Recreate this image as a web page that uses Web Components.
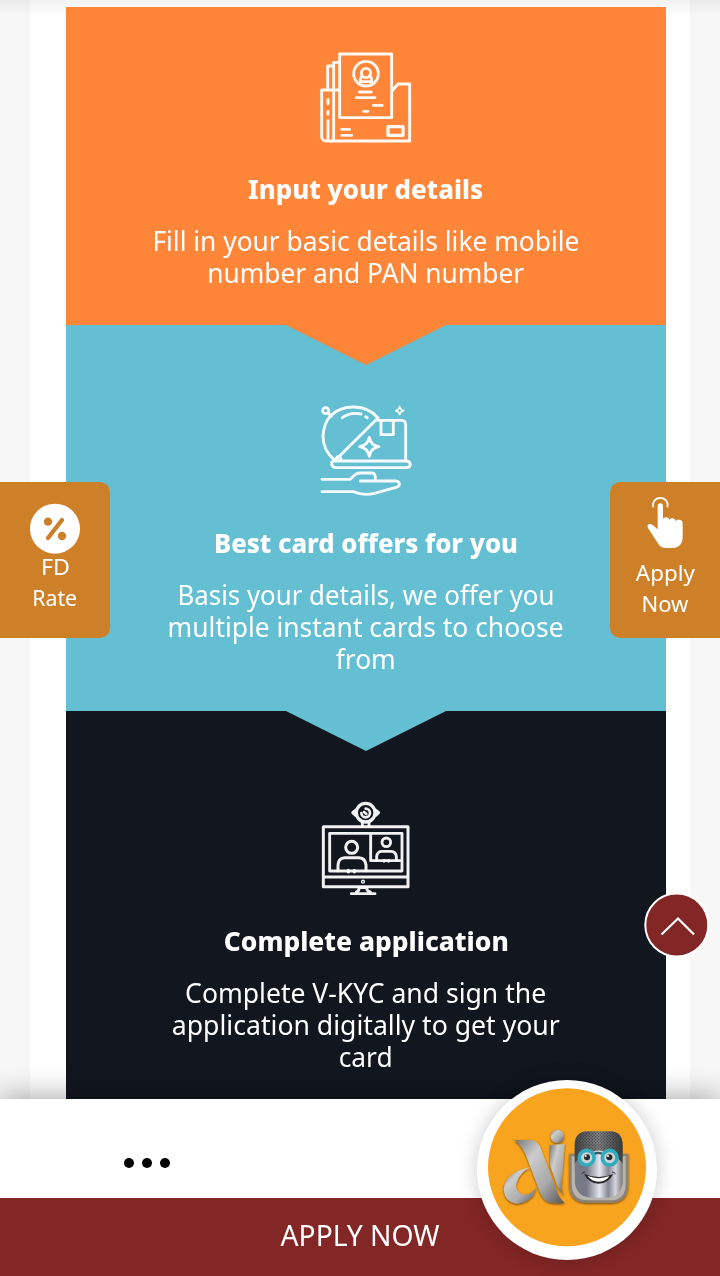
<!DOCTYPE html>
<html lang="en">
<head>
<meta charset="utf-8">
<title>Apply Now</title>
<style>
html,body{margin:0;height:100%;overflow:hidden}
body{font-family:"Noto Sans","Open Sans",sans-serif;background:#f7f7f7}
</style>
</head>
<body>
<card-page>
  <step-card style="--bg:#ff8639;--h:318px;--pt:33px;--gap:13px;--z:3">
    <step-icon slot="icon" name="folder"></step-icon>
    <fit-line slot="title" w="235">Input your details</fit-line>
    <fit-line w="427">Fill in your basic details like mobile</fit-line>
    <fit-line w="317">number and PAN number</fit-line>
  </step-card>
  <step-card style="--bg:#64bfd3;--h:386px;--pt:65px;--gap:17px;--z:2">
    <step-icon slot="icon" name="offer"></step-icon>
    <fit-line slot="title" w="304">Best card offers for you</fit-line>
    <fit-line w="377">Basis your details, we offer you</fit-line>
    <fit-line w="396">multiple instant cards to choose</fit-line>
    <fit-line w="60">from</fit-line>
  </step-card>
  <step-card last style="--bg:#12161f;--h:388px;--pt:79px;--gap:15px;--z:1">
    <step-icon slot="icon" name="video"></step-icon>
    <fit-line slot="title" w="285">Complete application</fit-line>
    <fit-line w="361">Complete V-KYC and sign the</fit-line>
    <fit-line w="388">application digitally to get your</fit-line>
    <fit-line w="54">card</fit-line>
  </step-card>
  <side-tab slot="over" side="left">
    <svg slot="icon" width="130" height="87" viewBox="0 0 390 261"><circle cx="165" cy="176" r="75" fill="#fff"/><g fill="#cd8028"><circle cx="144" cy="155" r="12.5"/><circle cx="186" cy="198" r="12.5"/></g><path d="M186 150L144 204" stroke="#cd8028" stroke-width="13" stroke-linecap="round"/></svg>
    <fit-line w="29">FD</fit-line><fit-line w="45">Rate</fit-line>
  </side-tab>
  <side-tab slot="over" side="right">
    <svg slot="icon" width="120" height="93" viewBox="0 0 360 279"><path d="M160 112a22 22 0 1 1 42 0" fill="none" stroke="#fff" stroke-width="5"/><path d="M173 108a8 8 0 0 1 16 0V147q2-5 9-5 9 0 10 8 2-6 9-5 9 0 10 9 3-6 10-5 11 1 11 11V199q0 34-30 35H197q-14 0-22-12L144 174c-5-11 4-16 14-9l15 13Z" fill="#fff"/></svg>
    <fit-line w="59">Apply</fit-line><fit-line w="47">Now</fit-line>
  </side-tab>
  <scroll-top slot="over"></scroll-top>
  <bottom-bar slot="over"><fit-line w="159">APPLY NOW</fit-line></bottom-bar>
  <chat-bot slot="over"></chat-bot>
</card-page>
<script>
const define=(name,html,init)=>customElements.define(name,class extends HTMLElement{
  connectedCallback(){
    if(this.shadowRoot)return;
    this.attachShadow({mode:'open'}).innerHTML=html;
    if(init)init(this,this.shadowRoot);
  }
});

define('card-page',`<style>
:host{display:block;position:relative;width:720px;height:1276px;overflow:hidden;background:#f7f7f7}
main{box-sizing:border-box;width:660px;height:1099px;margin:0 auto;padding:7px 24px 0 36px;background:#fff}
.top{position:absolute;inset:0 0 auto;height:16px;background:linear-gradient(#0000000d,#0000)}
</style><div class="top"></div><main><slot></slot></main><slot name="over"></slot>`);

define('step-card',`<style>
:host{display:flex;flex-direction:column;align-items:center;box-sizing:border-box;position:relative;z-index:var(--z);height:var(--h);padding-top:var(--pt);background:var(--bg);color:#fff;font-size:27px;line-height:32px}
:host(:not([last]))::after{content:"";position:absolute;top:calc(100% - 1px);left:220px;width:160px;height:41px;background:var(--bg);clip-path:polygon(0 0,100% 0,100% 1px,50% 100%,0 1px)}
h3{margin:var(--gap) 0 20px;font-size:26.5px;line-height:32px;font-weight:800}
p{margin:0;display:flex;flex-direction:column;align-items:center}
</style><slot name="icon"></slot><h3><slot name="title"></slot></h3><p><slot></slot></p>`);

const icons={
folder:`<path d="M119 42H275V233H119ZM119 67H101V150M101 78H83V150M119 150H65V291Q66 303 80 303H329V132H294L276 153M101 152V300"/><circle cx="198" cy="101" r="37"/><circle cx="198" cy="99" r="14"/><path d="M181 127V118Q182 111 188 108M215 127V118Q214 111 208 108M187 125H209M178 156H214M169 173H225M220 196H247M191 214H204M125 268H149M125 286H155M84 178V191M84 214V223M84 242V296"/><path d="M264 260H309V286H264Z" stroke-width="10"/>`,
offer:`<path d="M104 211Q69 181 69 138Q71 101 90 79C126 42 198 40 234 84M234 84L106 211M104 211L112 201Q121 194 124 212M232 91H306Q317 92 317 104V211M103 213H320Q330 214 331 224Q330 233 320 233H107Q94 232 95 216Z"/><path d="M127 83Q151 65 183 72M197 80L202 83"/><circle cx="77" cy="62" r="9"/><path d="M84 69L94 79M243 94V134H280V94"/><path d="M208 142Q212 167 237 170Q212 174 208 199Q203 174 179 170Q203 167 208 142Z"/><path stroke-width="5" d="M299 50Q301 60 311 62Q301 64 299 74Q297 64 287 62Q297 60 299 50Z"/><path d="M66 268H151L164 255Q171 249 181 249H217Q228 250 226 271M181 273H287Q302 275 297 287Q292 292 277 295L223 310Q190 318 160 305H66"/>`,
video:`<path d="M70 110H324V290H70ZM72 261H322" stroke-width="9"/><path d="M89 130H306V243H89ZM212 130V212H305"/><circle cx="197" cy="68" r="28" stroke-width="10"/><path d="M166 61L158 68L166 76M228 61L236 68L228 76M187 97V109M207 97V109"/><path d="M197 56A13 13 0 1 1 184 69" stroke-width="8"/><path d="M192 66L199 72" stroke-width="8"/><circle cx="155" cy="172" r="18" stroke-width="9"/><path d="M114 242V225Q115 204 134 203H177Q196 204 198 225V242M145 241V246M163 241V246" stroke-width="9"/><circle cx="259" cy="157" r="13"/><path d="M230 211V200Q231 185 245 184H273Q288 185 289 200V211M252 211V214M266 211V214"/><circle cx="189" cy="275" r="2"/><path d="M169 306Q178 304 177 293H200Q200 304 211 306M154 311H225"/>`};
define('step-icon',`<style>:host{display:block;width:130px;height:120px}svg{display:block}</style><svg width="130" height="120" viewBox="3 0 390 360" fill="none" stroke="#fff" stroke-opacity=".94" stroke-width="8.6" stroke-linecap="round" stroke-linejoin="round"></svg>`,
 (el,root)=>{root.querySelector('svg').innerHTML=icons[el.getAttribute('name')]});

define('side-tab',`<style>
:host{position:absolute;z-index:5;top:482px;width:110px;height:156px;box-sizing:border-box;background:#cd8028;color:#fff;display:flex;flex-direction:column;align-items:center;font-size:21.5px;line-height:31px}
:host([side=left]){left:0;border-radius:0 10px 10px 0}
:host([side=right]){right:0;border-radius:10px 0 0 10px}
.icon{height:69px;width:110px}
:host([side=right]) .icon{height:75px}
::slotted(svg){display:block;margin-top:-12px}
:host([side=right]) ::slotted(svg){margin-left:-10px}
</style><div class="icon"><slot name="icon"></slot></div><slot></slot>`);

define('scroll-top',`<style>
:host{position:absolute;z-index:5;left:644px;top:893px;width:65px;height:65px}
svg{display:block}
</style><svg width="65" height="65"><circle cx="32.8" cy="32" r="31.5" fill="#832626" stroke="#fff" stroke-width="2"/><path d="M17.5 41.5L34 25.5L50 41.5" fill="none" stroke="#fff" stroke-width="2.2"/></svg>`);

define('bottom-bar',`<style>
:host{position:absolute;z-index:6;inset:1099px 0 0;display:flex;flex-direction:column;background:#fff;box-shadow:0 0 30px #0006}
.menu{height:99px;display:flex;gap:8px;box-sizing:border-box;padding:59px 0 0 124px}
i{width:10px;height:10px;border-radius:50%;background:#000}
.apply{height:78px;display:flex;justify-content:center;background:#832626;color:#fff;font-size:29.5px;line-height:74px}
</style><div class="menu"><i></i><i></i><i></i></div><div class="apply"><slot></slot></div>`);

define('chat-bot',`<style>
:host{position:absolute;z-index:7;left:477px;top:1080px;width:180px;height:180px;border-radius:50%;background:#fff;box-shadow:0 0 20px #0003}
svg{display:block;margin:-10px 0 0 -17px}
</style><svg width="210" height="206" viewBox="0 0 630 618">
<defs>
<linearGradient id="m" x2="1" y2="1"><stop stop-color="#777"/><stop offset=".3" stop-color="#ccc"/><stop offset=".65" stop-color="#aaa"/><stop offset="1" stop-color="#555"/></linearGradient>
<linearGradient id="f"><stop stop-color="#777b86"/><stop offset=".25" stop-color="#777985"/><stop offset=".52" stop-color="#e4e7ef"/><stop offset=".7" stop-color="#858895"/><stop offset=".85" stop-color="#d4d5dc"/><stop offset="1" stop-color="#777"/></linearGradient>
<linearGradient id="h"><stop stop-color="#404245"/><stop offset=".5" stop-color="#888"/><stop offset="1" stop-color="#393a3d"/></linearGradient>
<pattern id="d" width="9" height="9" patternUnits="userSpaceOnUse"><circle cx="2" cy="2" r="1.8" fill="#333537"/><circle cx="6.5" cy="6.5" r="1.8" fill="#333537"/></pattern>
<filter id="s" x="-20%" y="-20%" width="140%" height="140%"><feDropShadow dx="0" dy="3" stdDeviation="3" flood-opacity=".6"/></filter>
</defs>
<circle cx="321" cy="292" r="237" fill="#f8a41f"/>
<g filter="url(#s)" fill="url(#m)">
<path d="M164 210H211Q235 211 244 240L291 364Q299 387 314 400H283Q253 398 242 371L199 258Q188 230 164 210Z"/>
<path d="M211 292C160 300 129 329 132 363Q137 397 169 401Q197 401 218 379L232 350Q212 376 189 374Q160 362 171 335Q180 307 211 292Z"/>
<path d="M270 226L314 222L304 352Q306 367 312 378L293 350L270 285Z"/>
<circle cx="292" cy="199" r="20"/>
</g>
<g filter="url(#s)"><path d="M328 251H505V341Q505 398 452 398H380Q328 397 328 344Z" fill="#8b8176"/><path d="M335 259H497V341Q497 391 450 391H382Q336 391 335 342Z" fill="#b9b4ad"/></g>
<path d="M344 282V225Q345 184 384 184H451Q487 185 488 225V282Z" fill="url(#h)"/>
<path d="M344 249V225Q345 184 384 184H451Q487 185 488 225V249Z" fill="url(#d)"/>
<path d="M344 280L368 252Q416 231 462 252L488 280V340Q480 383 440 383H393Q353 381 345 342Z" fill="url(#f)"/>
<path d="M398 255Q415 242 431 255" fill="none" stroke="#315b64" stroke-width="7"/>
<g fill="#ced4d6" stroke="#31acbc" stroke-width="11"><circle cx="380" cy="263" r="22"/><circle cx="449" cy="263" r="22"/></g>
<g fill="#272b2d"><circle cx="381" cy="262" r="9"/><circle cx="448" cy="262" r="9"/></g>
<g fill="#fff"><circle cx="377" cy="258" r="3"/><circle cx="444" cy="258" r="3"/></g>
<path d="M372 312Q417 330 460 312Q446 340 416 341Q386 340 372 312Z" fill="#292526"/><path d="M383 318Q417 331 448 318Q440 334 416 335Q395 335 383 318Z" fill="#fff"/>
<path d="M365 312Q367 307 375 306M456 306Q463 306 467 312" fill="none" stroke="#333" stroke-width="3"/>
</svg>`);

/* A single line of copy, condensed horizontally to its nominal width. */
define('fit-line',`<style>
:host{display:flex;justify-content:center;white-space:nowrap}
span{display:block;flex:none}
</style><span><slot></slot></span>`,(el,root)=>{
  const span=root.querySelector('span'), w=+el.getAttribute('w');
  el.style.width=w+'px';
  span.style.transform='scaleX('+w/span.getBoundingClientRect().width+')';
});
</script>
</body>
</html>
